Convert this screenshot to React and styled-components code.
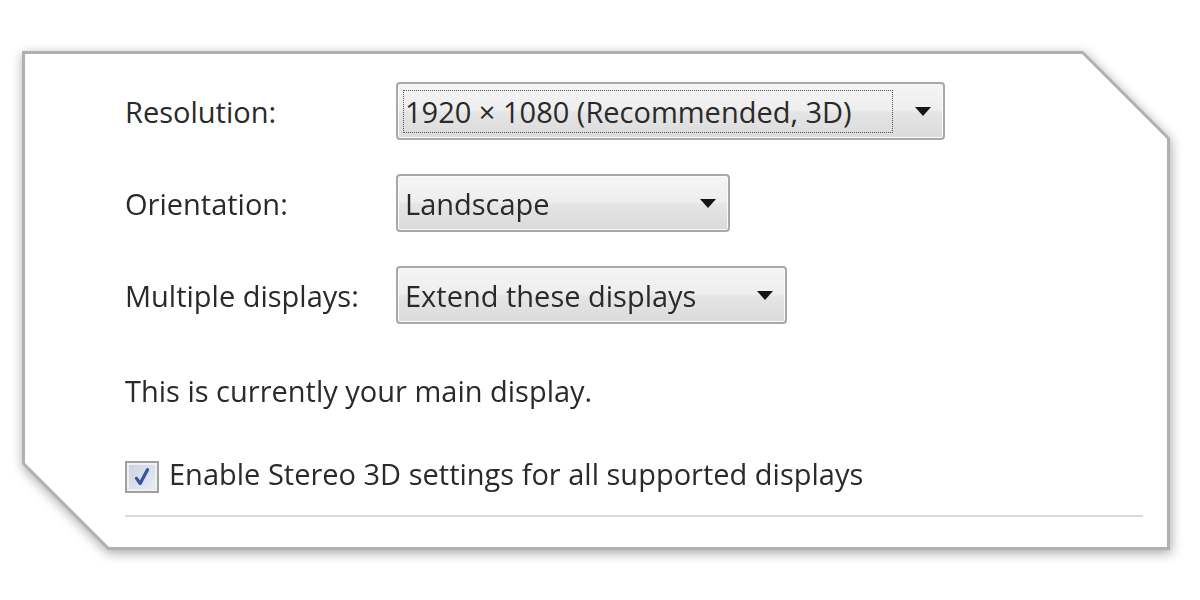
import styled, { createGlobalStyle } from "styled-components";

const GlobalStyle = createGlobalStyle`
  html, body {
    margin: 0;
    padding: 0;
    background: #ffffff;
  }
  body {
    width: 1200px;
    height: 600px;
    overflow: hidden;
    font-family: "Open Sans", "Noto Sans", sans-serif;
  }
`;

const settings = [
  { label: "Resolution:", value: "1920 × 1080 (Recommended, 3D)", width: 549, focused: true },
  { label: "Orientation:", value: "Landscape", width: 334 },
  { label: "Multiple displays:", value: "Extend these displays", width: 391 },
];

export default function App() {
  return (
    <>
      <GlobalStyle />
      <Page>
        <Shadow>
          <Frame>
            <Sheet>
              <Form>
                {settings.map((s) => (
                  <Row key={s.label}>
                    <Label>{s.label}</Label>
                    <Combo $width={s.width}>
                      <ComboText $focused={s.focused}>{s.value}</ComboText>
                      <Arrow viewBox="0 0 16 9">
                        <polygon points="0,0 16,0 8,9" fill="#151515" />
                      </Arrow>
                    </Combo>
                  </Row>
                ))}
              </Form>
              <Note>This is currently your main display.</Note>
              <CheckRow>
                <CheckBox>
                  <svg viewBox="0 0 24 24" width="22" height="22">
                    <path d="M6 13.5 L10 19 L18 4" fill="none" stroke="#3a5597" strokeWidth="3.6" strokeLinecap="round" strokeLinejoin="round" />
                  </svg>
                </CheckBox>
                <CheckLabel>Enable Stereo 3D settings for all supported displays</CheckLabel>
              </CheckRow>
              <Divider />
            </Sheet>
          </Frame>
        </Shadow>
      </Page>
    </>
  );
}

const Page = styled.div`
  width: 1200px;
  height: 600px;
  padding: 51px 0 0 22px;
  box-sizing: border-box;
`;

const Shadow = styled.div`
  width: 1148px;
  height: 499px;
  filter: drop-shadow(1px 3px 6px rgba(0, 0, 0, 0.35));
`;

const Frame = styled.div`
  width: 100%;
  height: 100%;
  box-sizing: border-box;
  padding: 3px;
  background: #b0b0b0;
  clip-path: polygon(0 0, calc(100% - 87px) 0, 100% 87px, 100% 100%, 86px 100%, 0 calc(100% - 86px));
`;

const Sheet = styled.div`
  width: 100%;
  height: 100%;
  box-sizing: border-box;
  background: #ffffff;
  padding: 28px 24px 0 100px;
  display: flex;
  flex-direction: column;
  clip-path: polygon(0 0, calc(100% - 85px) 0, 100% 85px, 100% 100%, 84px 100%, 0 calc(100% - 84px));
`;

const Form = styled.div`
  display: flex;
  flex-direction: column;
  gap: 34px;
`;

const Row = styled.div`
  display: grid;
  grid-template-columns: 271px auto;
  align-items: center;
`;

const Label = styled.div`
  font-size: 29px;
  color: #2a2a2a;
`;

const Combo = styled.div`
  width: ${(p) => p.$width}px;
  height: 58px;
  box-sizing: border-box;
  border: 2px solid #a8a8a8;
  border-radius: 4px;
  background: linear-gradient(#f5f5f5 0%, #eeeeee 48%, #e5e5e5 52%, #dbdbdb 100%);
  box-shadow: inset 0 0 0 1px #fafafa;
  display: flex;
  align-items: center;
  padding: 0 12px 0 5px;
  justify-content: space-between;
`;

const ComboText = styled.div`
  font-size: 29px;
  line-height: 35px;
  color: #2a2a2a;
  padding: 3px 1px;
  width: ${(p) => (p.$focused ? "490px" : "auto")};
  box-sizing: border-box;
  border: 1px dotted ${(p) => (p.$focused ? "#555" : "transparent")};
  white-space: nowrap;
`;

const Arrow = styled.svg`
  width: 16px;
  height: 9px;
  flex-shrink: 0;
`;

const Note = styled.div`
  margin-top: 47px;
  font-size: 29px;
  color: #2a2a2a;
`;

const CheckRow = styled.div`
  margin-top: 44px;
  display: flex;
  align-items: flex-start;
  gap: 10px;
`;

const CheckBox = styled.div`
  width: 34px;
  height: 32px;
  margin-top: 7px;
  box-sizing: border-box;
  border: 2px solid #a0a0a0;
  background: linear-gradient(135deg, #c9d1e2, #e9edf5);
  box-shadow: inset 0 0 0 2px #f0f0f0;
  display: flex;
  align-items: center;
  justify-content: center;
`;

const CheckLabel = styled.div`
  font-size: 29px;
  color: #2a2a2a;
`;

const Divider = styled.div`
  margin-top: 22px;
  height: 2px;
  background: #d9d9d9;
`;
